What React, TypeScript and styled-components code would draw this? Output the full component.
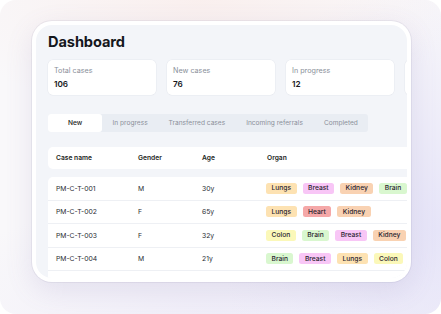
import React from "react";
import styled, { createGlobalStyle } from "styled-components";

const Global = createGlobalStyle`
  html, body { margin: 0; padding: 0; background: #ffffff; }
  body { font-family: Inter, "Noto Sans", sans-serif; -webkit-font-smoothing: antialiased; }
  * { box-sizing: border-box; }
`;

const Canvas = styled.div`
  width: 441px;
  height: 314px;
  border-radius: 16px;
  overflow: hidden;
  padding: 21px 30px 0 32px;
  background:
    radial-gradient(ellipse 260px 120px at 200px 0px, rgba(250, 232, 228, 0.55), rgba(250, 232, 228, 0) 100%),
    radial-gradient(ellipse 220px 260px at 441px 230px, rgba(226, 224, 248, 0.8), rgba(226, 224, 248, 0) 100%),
    radial-gradient(ellipse 300px 120px at 220px 314px, rgba(236, 233, 248, 0.7), rgba(236, 233, 248, 0) 100%),
    #f9f8fa;
`;

const Frame = styled.div`
  width: 379px;
  height: 261px;
  border-radius: 20px;
  background: #ffffff;
  padding: 4px;
  box-shadow: 0 0 0 1px rgba(40, 40, 80, 0.06), 0 8px 28px rgba(110, 100, 160, 0.14);
`;

const Screen = styled.div`
  width: 100%;
  height: 100%;
  border-radius: 16px;
  background: #f3f5f9;
  overflow: hidden;
  padding: 8px 0 0 12px;
  display: flex;
  flex-direction: column;
  & > * { flex-shrink: 0; }
`;

const Title = styled.h1`
  margin: 0;
  font-size: 14.6px;
  line-height: 18px;
  font-weight: 700;
  color: #15171c;
  letter-spacing: -0.1px;
`;

const Stats = styled.div`
  display: flex;
  gap: 11px;
  margin-top: 9px;
`;

const StatCard = styled.div`
  flex: 0 0 108px;
  height: 35px;
  background: #ffffff;
  border-radius: 5px;
  box-shadow: 0 0 0 0.5px rgba(20, 30, 60, 0.06);
  padding: 5px 6px 0;
  display: flex;
  flex-direction: column;
  gap: 2px;
`;

const StatLabel = styled.span`
  font-size: 7.2px;
  line-height: 11px;
  color: #8a8f99;
`;

const StatValue = styled.span`
  font-size: 8.2px;
  line-height: 12px;
  font-weight: 600;
  color: #15171c;
`;

const Tabs = styled.div`
  display: flex;
  align-self: flex-start;
  margin-top: 19px;
  height: 18px;
  background: #e9edf3;
  border-radius: 3px;
`;

const Tab = styled.div<{ $active?: boolean }>`
  display: flex;
  align-items: center;
  justify-content: center;
  padding: 0 10.5px;
  min-width: ${(p) => (p.$active ? "54px" : "0")};
  font-size: 6.6px;
  white-space: nowrap;
  border-radius: 3px;
  color: ${(p) => (p.$active ? "#1b1d22" : "#8b909a")};
  font-weight: ${(p) => (p.$active ? 500 : 400)};
  background: ${(p) => (p.$active ? "#ffffff" : "transparent")};
`;

const Table = styled.div`
  width: 420px;
  margin-top: 15px;
  display: flex;
  flex-direction: column;
  gap: 8px;
`;

const grid = `
  display: grid;
  grid-template-columns: 82px 64px 65px 1fr;
  align-items: center;
  padding-left: 8px;
`;

const HeaderRow = styled.div`
  ${grid}
  height: 22px;
  background: #ffffff;
  border-radius: 5px;
  font-size: 6.7px;
  font-weight: 600;
  color: #1b1d22;
`;

const Body = styled.div`
  background: #ffffff;
  border-radius: 5px 5px 0 0;
  display: flex;
  flex-direction: column;
  padding-bottom: 12px;
`;

const Row = styled.div`
  ${grid}
  height: 23.5px;
  border-bottom: 1px solid #eef0f4;
  font-size: 6.8px;
  color: #2a2d33;
`;

const Tags = styled.div`
  display: flex;
  gap: 6px;
  margin-left: -1px;
`;

const tagColors: Record<string, string> = {
  Lungs: "#fde2b2",
  Breast: "#f8c6f6",
  Kidney: "#f9d2b2",
  Brain: "#d9f7cf",
  Heart: "#f5a8a8",
  Colon: "#fbf8b9",
};

const Tag = styled.span<{ $bg: string }>`
  display: inline-flex;
  align-items: center;
  height: 11px;
  padding: 0 5.5px;
  border-radius: 2.5px;
  background: ${(p) => p.$bg};
  font-size: 6.7px;
  font-weight: 500;
  color: #2a2530;
  white-space: nowrap;
`;

const stats = [
  { label: "Total cases", value: "106" },
  { label: "New cases", value: "76" },
  { label: "In progress", value: "12" },
];

const tabs = ["New", "In progress", "Transferred cases", "Incoming referrals", "Completed"];

const rows = [
  { id: "PM-C-T-001", g: "M", age: "30y", organs: ["Lungs", "Breast", "Kidney", "Brain"] },
  { id: "PM-C-T-002", g: "F", age: "65y", organs: ["Lungs", "Heart", "Kidney"] },
  { id: "PM-C-T-003", g: "F", age: "32y", organs: ["Colon", "Brain", "Breast", "Kidney"] },
  { id: "PM-C-T-004", g: "M", age: "21y", organs: ["Brain", "Breast", "Lungs", "Colon"] },
];

export default function App() {
  return (
    <>
      <Global />
      <Canvas>
        <Frame>
          <Screen>
            <Title>Dashboard</Title>
            <Stats>
              {stats.map((s) => (
                <StatCard key={s.label}>
                  <StatLabel>{s.label}</StatLabel>
                  <StatValue>{s.value}</StatValue>
                </StatCard>
              ))}
              <StatCard aria-hidden />
            </Stats>
            <Tabs>
              {tabs.map((t, i) => (
                <Tab key={t} $active={i === 0}>
                  {t}
                </Tab>
              ))}
            </Tabs>
            <Table>
              <HeaderRow>
                <span>Case name</span>
                <span>Gender</span>
                <span>Age</span>
                <span>Organ</span>
              </HeaderRow>
              <Body>
                {rows.map((r) => (
                  <Row key={r.id}>
                    <span>{r.id}</span>
                    <span>{r.g}</span>
                    <span>{r.age}</span>
                    <Tags>
                      {r.organs.map((o) => (
                        <Tag key={o} $bg={tagColors[o]}>
                          {o}
                        </Tag>
                      ))}
                    </Tags>
                  </Row>
                ))}
              </Body>
            </Table>
          </Screen>
        </Frame>
      </Canvas>
    </>
  );
}
